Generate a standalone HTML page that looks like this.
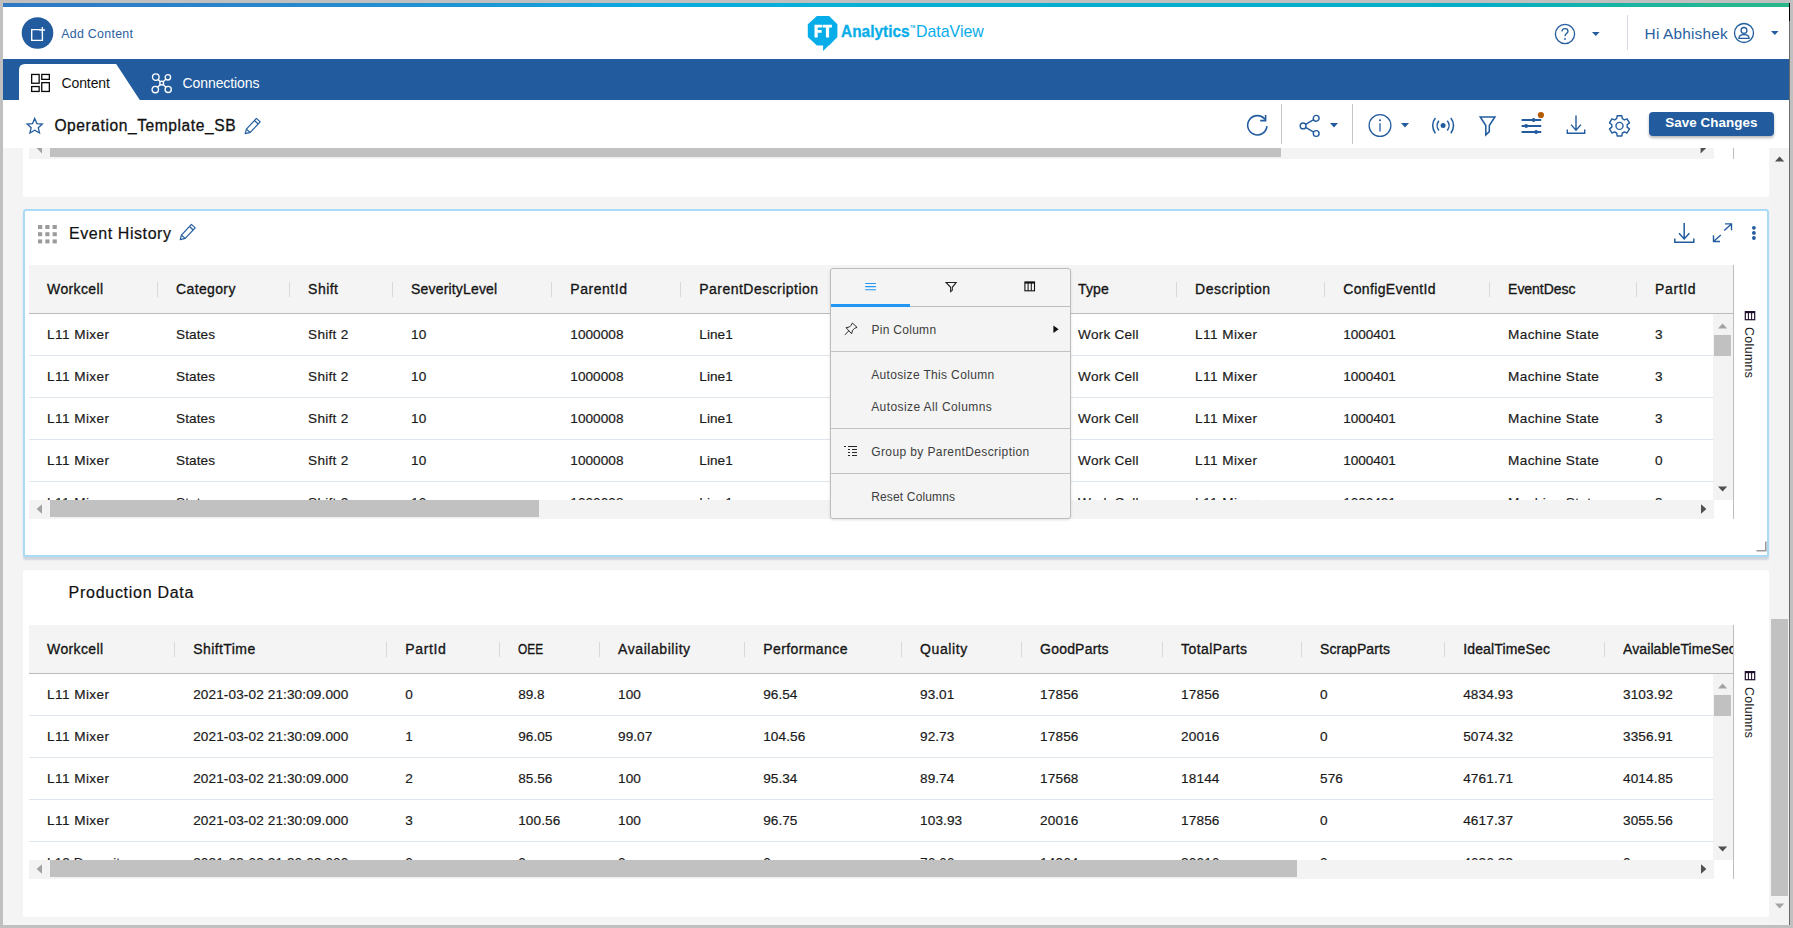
<!DOCTYPE html>
<html>
<head>
<meta charset="utf-8">
<title>FT Analytics DataView</title>
<style>
*{box-sizing:border-box;margin:0;padding:0}
html,body{width:1793px;height:928px;overflow:hidden;background:#c0c0c0;font-family:"Liberation Sans",sans-serif}
.t{position:absolute;white-space:nowrap;font-family:"Liberation Sans",sans-serif}
svg{overflow:visible}
</style>
</head>
<body>
<div style="position:absolute;left:3px;top:3px;width:1786px;height:922px;background:#f4f4f4;"></div>
<div style="position:absolute;left:1788.8px;top:3px;width:1.2px;height:922px;background:#6c6c6c;"></div>
<div style="position:absolute;left:1789px;top:3px;width:1px;height:18px;background:#000;"></div>
<div style="position:absolute;left:3px;top:3px;width:1786px;height:4px;background:linear-gradient(90deg,#2e78c2 0%,#2986ca 14%,#1b98d6 28%,#0aa9e0 36%,#06b0d6 46%,#05aed0 60%,#04adc6 83%,#16b3a6 90%,#24b690 96%,#28b78a 100%);"></div>
<div style="position:absolute;left:3px;top:7px;width:1786px;height:52px;background:#fff;"></div>
<div style="position:absolute;left:3px;top:59px;width:1786px;height:41px;background:#235c9e;"></div>
<div style="position:absolute;left:3px;top:100px;width:1786px;height:48px;background:#fff;"></div>
<svg style="position:absolute;left:21px;top:17px;" width="33" height="33" viewBox="0 0 33 33"><circle cx="16.5" cy="16" r="15.8" fill="#235c9e"/><path d="M19.3 12.6H10.7V23.4H21.4V15" fill="none" stroke="#fff" stroke-width="1.4"/><path d="M21.3 10.1V16.2M18.3 13H24" fill="none" stroke="#fff" stroke-width="1.3"/></svg>
<div class="t" style="left:61.2px;top:23.72px;line-height:20px;height:20px;color:#2b5f9f;font-size:12.4px;font-weight:400;letter-spacing:0.291px;">Add Content</div>
<svg style="position:absolute;left:806px;top:14px;" width="34" height="40" viewBox="0 0 34 40"><path d="M10.9 2H23.1L31.4 10.3V23.1L23.1 31.4H22.6L17.1 37V31.4H10.9L1.8 23.1V10.3Z" fill="#07ade8"/><path d="M8.5 10.7H16.4V13.6H11.7V15.9H15.6V18.7H11.7V23.6H8.5Z M17 10.7H25.9V13.6H23.1V23.6H19.9V13.6H17Z" fill="#fff"/></svg>
<div class="t" style="left:841.0px;top:22.15px;line-height:20px;height:20px;color:#07ade8;font-size:17px;font-weight:700;transform:scaleX(0.9075);transform-origin:0 0;-webkit-text-stroke:0.3px #07ade8;">Analytics</div>
<div class="t" style="left:909.7px;top:16.56px;line-height:20px;height:20px;color:#07ade8;font-size:4px;font-weight:700;transform:scaleX(0.8995);transform-origin:0 0;">TM</div>
<div class="t" style="left:915.9px;top:22.15px;line-height:20px;height:20px;color:#07ade8;font-size:17px;font-weight:400;transform:scaleX(0.9358);transform-origin:0 0;">DataView</div>
<svg style="position:absolute;left:1554px;top:23px;" width="22" height="22" viewBox="0 0 22 22"><circle cx="11" cy="11" r="9.6" fill="none" stroke="#235c9e" stroke-width="1.3"/><path d="M8 8.6C8 6.6 9.4 5.6 11 5.6C12.7 5.6 14 6.7 14 8.3C14 10.6 11 10.6 11 13.2" fill="none" stroke="#235c9e" stroke-width="1.3"/><circle cx="11" cy="16" r="0.9" fill="#235c9e"/></svg>
<svg style="position:absolute;left:1591.8px;top:32px;" width="8" height="4" viewBox="0 0 8 4"><path d="M0 0H7.6L3.8 4Z" fill="#235c9e"/></svg>
<div style="position:absolute;left:1627px;top:15px;width:1px;height:35px;background:#d3d8e2;"></div>
<div class="t" style="left:1644.6px;top:23.61px;line-height:20px;height:20px;color:#2a5f9f;font-size:15.4px;font-weight:400;letter-spacing:0.172px;">Hi Abhishek</div>
<svg style="position:absolute;left:1733px;top:22px;" width="22" height="22" viewBox="0 0 22 22"><circle cx="11" cy="11" r="9.5" fill="none" stroke="#235c9e" stroke-width="1.3"/><circle cx="11" cy="8.4" r="2.9" fill="none" stroke="#235c9e" stroke-width="1.3"/><path d="M5.9 16.4C5.9 13.6 8 12.6 11 12.6C14 12.6 16.1 13.6 16.1 16.4Z" fill="none" stroke="#235c9e" stroke-width="1.3" stroke-linejoin="round"/></svg>
<svg style="position:absolute;left:1770.7px;top:31px;" width="8" height="4" viewBox="0 0 8 4"><path d="M0 0H7.6L3.8 4Z" fill="#235c9e"/></svg>
<svg style="position:absolute;left:19px;top:64px;" width="122" height="36" viewBox="0 0 122 36"><path d="M0 36V6Q0 0 6 0H97.2L120.8 36Z" fill="#fff"/></svg>
<svg style="position:absolute;left:30px;top:73px;" width="21" height="20" viewBox="0 0 21 20"><g fill="none" stroke="#0a0a0a" stroke-width="1.3"><rect x="1.65" y="1.45" width="7.5" height="8.8"/><rect x="11.75" y="1.45" width="7.6" height="4.9"/><rect x="1.65" y="13.55" width="7.5" height="4.9"/><rect x="11.75" y="9.65" width="7.6" height="8.8"/></g></svg>
<div class="t" style="left:61.5px;top:73.10px;line-height:20px;height:20px;color:#111;font-size:14px;font-weight:400;letter-spacing:-0.108px;">Content</div>
<svg style="position:absolute;left:150px;top:72px;" width="24" height="24" viewBox="0 0 24 24"><g fill="none" stroke="#fff" stroke-width="1.35"><circle cx="5.8" cy="5.1" r="3.3"/><circle cx="17.9" cy="5.3" r="2.7"/><circle cx="5.3" cy="17.5" r="3.2"/><circle cx="18.2" cy="17.4" r="3.1"/><circle cx="11.7" cy="11.1" r="1.9"/><path d="M8.2 7.5L10.3 9.7M15.9 7.3L13.1 9.7M7.6 15.2L10.3 12.5M16 15.2L13.1 12.5"/></g></svg>
<div class="t" style="left:182.6px;top:73.10px;line-height:20px;height:20px;color:#fff;font-size:14px;font-weight:400;letter-spacing:-0.103px;">Connections</div>
<svg style="position:absolute;left:26px;top:116.9px;" width="17.8" height="17.8" viewBox="0 0 19.6 19.6"><path d="M9.6 1.6L12 7.2L18 7.8L13.5 11.8L14.9 17.7L9.6 14.6L4.3 17.7L5.7 11.8L1.2 7.8L7.2 7.2Z" fill="none" stroke="#235c9e" stroke-width="1.4" stroke-linejoin="miter"/></svg>
<div class="t" style="left:54.4px;top:116.09px;line-height:20px;height:20px;color:#111;font-size:15.6px;font-weight:400;letter-spacing:0.565px;-webkit-text-stroke:0.3px #111;">Operation_Template_SB</div>
<svg style="position:absolute;left:244px;top:117px;" width="18" height="18" viewBox="0 0 18 18"><g fill="none" stroke="#235c9e" stroke-width="1.2" stroke-linejoin="round"><path d="M1.2 16.6L2.4 12.2L12.4 1.4L16.2 4.9L6.2 15.4Z"/><path d="M10.4 3.5L14.2 7"/><path d="M2.4 12.2L6.2 15.4"/></g></svg>
<svg style="position:absolute;left:1245px;top:113px;" width="24" height="24" viewBox="0 0 24 24"><path d="M20.04 6.42A9.65 9.65 0 1 0 21.95 13.17" fill="none" stroke="#235c9e" stroke-width="1.6"/><path d="M20.6 1.9V7.6H15.2" fill="none" stroke="#235c9e" stroke-width="1.6"/></svg>
<div style="position:absolute;left:1281px;top:104px;width:1px;height:40px;background:#c4c4c4;"></div>
<svg style="position:absolute;left:1298px;top:114px;" width="24" height="24" viewBox="0 0 24 24"><g fill="none" stroke="#235c9e" stroke-width="1.4"><circle cx="5.1" cy="11.9" r="2.9"/><circle cx="18.2" cy="4.3" r="2.9"/><circle cx="18.2" cy="19.5" r="2.9"/><path d="M7.6 10.4L15.7 5.7M7.6 13.4L15.7 18.1"/></g></svg>
<svg style="position:absolute;left:1330.2px;top:123.1px;" width="8.2" height="4.6" viewBox="0 0 8.2 4.6"><path d="M0 0H8L4 4.6Z" fill="#235c9e"/></svg>
<div style="position:absolute;left:1352px;top:104px;width:1px;height:40px;background:#c4c4c4;"></div>
<svg style="position:absolute;left:1367px;top:113px;" width="26" height="26" viewBox="0 0 26 26"><circle cx="13" cy="12.5" r="10.9" fill="none" stroke="#235c9e" stroke-width="1.25"/><path d="M13 10.2V18.6" stroke="#235c9e" stroke-width="1.3"/><circle cx="13" cy="7.2" r="1.05" fill="#235c9e"/></svg>
<svg style="position:absolute;left:1401px;top:123.1px;" width="8.2" height="4.6" viewBox="0 0 8.2 4.6"><path d="M0 0H8L4 4.6Z" fill="#235c9e"/></svg>
<svg style="position:absolute;left:1431px;top:116px;" width="24" height="20" viewBox="0 0 24 20"><g fill="none" stroke="#235c9e" stroke-width="1.55" stroke-linecap="butt"><path d="M4.4 2C0.8 6.2 0.8 13 4.4 17.2"/><path d="M7.9 4.8C5.6 7.6 5.6 11.6 7.9 14.4"/><path d="M19.8 2C23.4 6.2 23.4 13 19.8 17.2"/><path d="M16.3 4.8C18.6 7.6 18.6 11.6 16.3 14.4"/></g><circle cx="12.1" cy="9.6" r="2.5" fill="#235c9e"/></svg>
<svg style="position:absolute;left:1478px;top:115px;" width="20" height="22" viewBox="0 0 20 22"><path d="M2.3 2H16.9L11.3 10.5V16.6L7.8 19.9V10.5Z" fill="none" stroke="#235c9e" stroke-width="1.55" stroke-linejoin="miter"/></svg>
<svg style="position:absolute;left:1520px;top:111px;" width="24" height="24" viewBox="0 0 24 24"><g stroke="#235c9e" stroke-width="1.8"><path d="M1.6 9H21.2M1.6 15H21.2M1.6 21H21.2"/></g><g fill="#235c9e"><circle cx="13.6" cy="9" r="1.9"/><circle cx="6.2" cy="15" r="1.9"/><circle cx="16.1" cy="21" r="1.9"/></g><circle cx="20.9" cy="4" r="3.1" fill="#b35a06"/></svg>
<svg style="position:absolute;left:1565.7px;top:115.4px;" width="20" height="20" viewBox="0 0 20 20"><g fill="none" stroke="#235c9e" stroke-width="1.4"><path d="M10 0.6V14.4M5 9.6L10 15.2L15 9.6"/><path d="M1.3 14.6V18.2H18.7V14.6"/></g></svg>
<svg style="position:absolute;left:1607px;top:113px;" width="26" height="26" viewBox="0 0 26 26"><path d="M9.74 5.71L10.13 2.77L14.87 2.77L15.26 5.71A7.70 7.70 0 0 1 17.35 6.92L20.08 5.78L22.46 9.89L20.11 11.70A7.70 7.70 0 0 1 20.11 14.10L22.46 15.91L20.08 20.02L17.35 18.88A7.70 7.70 0 0 1 15.26 20.09L14.87 23.03L10.13 23.03L9.74 20.09A7.70 7.70 0 0 1 7.65 18.88L4.92 20.02L2.54 15.91L4.89 14.10A7.70 7.70 0 0 1 4.89 11.70L2.54 9.89L4.92 5.78L7.65 6.92A7.70 7.70 0 0 1 9.74 5.71 Z" fill="none" stroke="#235c9e" stroke-width="1.4" stroke-linejoin="round"/><circle cx="12.5" cy="12.9" r="3.5" fill="none" stroke="#235c9e" stroke-width="1.4"/></svg>
<div style="position:absolute;left:1649px;top:112px;width:125px;height:24px;background:#235c9e;border-radius:4px;box-shadow:0 2px 3px rgba(0,0,0,0.28);"></div>
<div class="t" style="left:1665.2px;top:113.18px;line-height:20px;height:20px;color:#fff;font-size:13.4px;font-weight:700;letter-spacing:0.059px;">Save Changes</div>
<div style="position:absolute;left:1771px;top:148px;width:18px;height:777px;background:#f3f3f3;"></div>
<div style="position:absolute;left:1770.7px;top:618.8px;width:17px;height:277px;background:#c1c1c1;"></div>
<svg style="position:absolute;left:1774.8px;top:156.3px;" width="10" height="6" viewBox="0 0 10 6"><path d="M0 5.5L4.6 0.5L9.2 5.5Z" fill="#505050"/></svg>
<svg style="position:absolute;left:1774.8px;top:902.6px;" width="10" height="6" viewBox="0 0 10 6"><path d="M0 0.5L4.6 5.5L9.2 0.5Z" fill="#a3a3a3"/></svg>
<div style="position:absolute;left:23px;top:148px;width:1746px;height:48.5px;background:#fff;border-radius:0 0 2px 2px;"></div>
<div style="position:absolute;left:29px;top:148px;width:1685px;height:10.6px;background:#f3f3f3;"></div>
<div style="position:absolute;left:50px;top:148px;width:1231px;height:8.5px;background:#c1c1c1;"></div>
<svg style="position:absolute;left:36px;top:148px;" width="7" height="6" viewBox="0 0 7 6"><path d="M6 0V5.4L0.6 0Z" fill="#a3a3a3"/></svg>
<svg style="position:absolute;left:1700.4px;top:148px;" width="8" height="6" viewBox="0 0 8 6"><path d="M0.6 0H6.2L0.6 5.4Z" fill="#505050"/></svg>
<div style="position:absolute;left:1733px;top:148px;width:1px;height:10.6px;background:#bdbdbd;"></div>
<div style="position:absolute;left:23px;top:209px;width:1746px;height:348px;background:#fff;border:2px solid #a9dbf6;border-radius:3px;box-shadow:0 3px 1.5px -0.5px rgba(140,155,180,0.33);"></div>
<svg style="position:absolute;left:38.2px;top:225.2px;" width="20" height="20" viewBox="0 0 20 20"><rect x="0.0" y="0.0" width="4.2" height="4" fill="#9b9b9b"/><rect x="0.0" y="7.2" width="4.2" height="4" fill="#9b9b9b"/><rect x="0.0" y="14.4" width="4.2" height="4" fill="#9b9b9b"/><rect x="7.3" y="0.0" width="4.2" height="4" fill="#9b9b9b"/><rect x="7.3" y="7.2" width="4.2" height="4" fill="#9b9b9b"/><rect x="7.3" y="14.4" width="4.2" height="4" fill="#9b9b9b"/><rect x="14.6" y="0.0" width="4.2" height="4" fill="#9b9b9b"/><rect x="14.6" y="7.2" width="4.2" height="4" fill="#9b9b9b"/><rect x="14.6" y="14.4" width="4.2" height="4" fill="#9b9b9b"/></svg>
<div class="t" style="left:69px;top:223.78px;line-height:20px;height:20px;color:#111;font-size:16px;font-weight:400;letter-spacing:0.572px;-webkit-text-stroke:0.2px #111;">Event History</div>
<svg style="position:absolute;left:178.6px;top:223.4px;" width="18" height="18" viewBox="0 0 18 18"><g fill="none" stroke="#235c9e" stroke-width="1.2" stroke-linejoin="round"><path d="M1.2 16.6L2.4 12.2L12.4 1.4L16.2 4.9L6.2 15.4Z"/><path d="M10.4 3.5L14.2 7"/><path d="M2.4 12.2L6.2 15.4"/></g></svg>
<svg style="position:absolute;left:1674.2px;top:222.9px;" width="21" height="20" viewBox="0 0 21 20"><g fill="none" stroke="#235c9e" stroke-width="1.5"><path d="M10.2 0V15.2M5 10.2L10.2 16L15.4 10.2"/><path d="M0.8 15.6V19.2H19.8V15.6"/></g></svg>
<svg style="position:absolute;left:1713px;top:222.6px;" width="20" height="20" viewBox="0 0 20 20"><g fill="none" stroke="#235c9e" stroke-width="1.4"><path d="M11.2 7.4L18.2 1.2M12 0.9H18.5V7.2"/><path d="M7.8 12L0.8 18.2M7 18.5H0.5V12.2"/></g></svg>
<svg style="position:absolute;left:1751px;top:225px;" width="6" height="16" viewBox="0 0 6 16"><g fill="#235c9e"><circle cx="2.9" cy="2.8" r="1.9"/><circle cx="2.9" cy="7.9" r="1.9"/><circle cx="2.9" cy="13" r="1.9"/></g></svg>
<svg style="position:absolute;left:1756px;top:541px;" width="11" height="11" viewBox="0 0 11 11"><path d="M9.8 0.5V9.8H0.5" fill="none" stroke="#9a9a9a" stroke-width="1.6"/></svg>
<div style="position:absolute;left:23px;top:569.5px;width:1746px;height:347px;background:#fff;border-radius:2px;"></div>
<div class="t" style="left:68.6px;top:582.53px;line-height:20px;height:20px;color:#111;font-size:16px;font-weight:400;letter-spacing:0.719px;-webkit-text-stroke:0.2px #111;">Production Data</div>
<div style="position:absolute;left:29px;top:265px;width:1704.5px;height:48px;background:#f4f4f4;"></div>
<div style="position:absolute;left:29px;top:313px;width:1704.5px;height:1px;background:#bcbcbc;"></div>
<div style="position:absolute;left:29px;top:314px;width:1685px;height:186px;background:#fff;"></div>
<div style="position:absolute;left:29px;top:355px;width:1685px;height:1px;background:#dfe5ec;"></div>
<div style="position:absolute;left:29px;top:397px;width:1685px;height:1px;background:#dfe5ec;"></div>
<div style="position:absolute;left:29px;top:439px;width:1685px;height:1px;background:#dfe5ec;"></div>
<div style="position:absolute;left:29px;top:481px;width:1685px;height:1px;background:#dfe5ec;"></div>
<div class="t" style="left:47.1px;top:278.95px;line-height:20px;height:20px;color:#151515;font-size:14px;font-weight:400;letter-spacing:0.368px;-webkit-text-stroke:0.32px #151515;">Workcell</div>
<div style="position:absolute;left:157px;top:281.5px;width:1px;height:15px;background:#d9d9d9;"></div>
<div class="t" style="left:176.1px;top:278.95px;line-height:20px;height:20px;color:#151515;font-size:14px;font-weight:400;letter-spacing:0.355px;-webkit-text-stroke:0.32px #151515;">Category</div>
<div style="position:absolute;left:289px;top:281.5px;width:1px;height:15px;background:#d9d9d9;"></div>
<div class="t" style="left:308.1px;top:278.95px;line-height:20px;height:20px;color:#151515;font-size:14px;font-weight:400;letter-spacing:0.471px;-webkit-text-stroke:0.32px #151515;">Shift</div>
<div style="position:absolute;left:392px;top:281.5px;width:1px;height:15px;background:#d9d9d9;"></div>
<div class="t" style="left:411.1px;top:278.95px;line-height:20px;height:20px;color:#151515;font-size:14px;font-weight:400;letter-spacing:0.171px;-webkit-text-stroke:0.32px #151515;">SeverityLevel</div>
<div style="position:absolute;left:551px;top:281.5px;width:1px;height:15px;background:#d9d9d9;"></div>
<div class="t" style="left:570.3px;top:278.95px;line-height:20px;height:20px;color:#151515;font-size:14px;font-weight:400;letter-spacing:0.538px;-webkit-text-stroke:0.32px #151515;">ParentId</div>
<div style="position:absolute;left:680px;top:281.5px;width:1px;height:15px;background:#d9d9d9;"></div>
<div class="t" style="left:699.3px;top:278.95px;line-height:20px;height:20px;color:#151515;font-size:14px;font-weight:400;letter-spacing:0.464px;-webkit-text-stroke:0.32px #151515;">ParentDescription</div>
<div class="t" style="left:1078.1px;top:278.95px;line-height:20px;height:20px;color:#151515;font-size:14px;font-weight:400;letter-spacing:0.080px;-webkit-text-stroke:0.32px #151515;">Type</div>
<div style="position:absolute;left:1176px;top:281.5px;width:1px;height:15px;background:#d9d9d9;"></div>
<div class="t" style="left:1195.1px;top:278.95px;line-height:20px;height:20px;color:#151515;font-size:14px;font-weight:400;letter-spacing:0.497px;-webkit-text-stroke:0.32px #151515;">Description</div>
<div style="position:absolute;left:1324px;top:281.5px;width:1px;height:15px;background:#d9d9d9;"></div>
<div class="t" style="left:1343.2px;top:278.95px;line-height:20px;height:20px;color:#151515;font-size:14px;font-weight:400;letter-spacing:0.362px;-webkit-text-stroke:0.32px #151515;">ConfigEventId</div>
<div style="position:absolute;left:1489px;top:281.5px;width:1px;height:15px;background:#d9d9d9;"></div>
<div class="t" style="left:1508.1px;top:278.95px;line-height:20px;height:20px;color:#151515;font-size:14px;font-weight:400;letter-spacing:-0.038px;-webkit-text-stroke:0.32px #151515;">EventDesc</div>
<div style="position:absolute;left:1636px;top:281.5px;width:1px;height:15px;background:#d9d9d9;"></div>
<div class="t" style="left:1655.1px;top:278.95px;line-height:20px;height:20px;color:#151515;font-size:14px;font-weight:400;letter-spacing:0.608px;-webkit-text-stroke:0.32px #151515;">PartId</div>
<div class="t" style="left:47.1px;top:325.36px;line-height:20px;height:20px;color:#1a1a1a;font-size:13.6px;font-weight:400;letter-spacing:0.414px;-webkit-text-stroke:0.18px #1a1a1a;">L11 Mixer</div>
<div class="t" style="left:176.1px;top:325.36px;line-height:20px;height:20px;color:#1a1a1a;font-size:13.6px;font-weight:400;letter-spacing:0.071px;-webkit-text-stroke:0.18px #1a1a1a;">States</div>
<div class="t" style="left:308.1px;top:325.36px;line-height:20px;height:20px;color:#1a1a1a;font-size:13.6px;font-weight:400;letter-spacing:0.276px;-webkit-text-stroke:0.18px #1a1a1a;">Shift 2</div>
<div class="t" style="left:411.1px;top:325.36px;line-height:20px;height:20px;color:#1a1a1a;font-size:13.6px;font-weight:400;letter-spacing:-0.025px;-webkit-text-stroke:0.18px #1a1a1a;">10</div>
<div class="t" style="left:570.3px;top:325.36px;line-height:20px;height:20px;color:#1a1a1a;font-size:13.6px;font-weight:400;letter-spacing:0.046px;-webkit-text-stroke:0.18px #1a1a1a;">1000008</div>
<div class="t" style="left:699.3px;top:325.36px;line-height:20px;height:20px;color:#1a1a1a;font-size:13.6px;font-weight:400;letter-spacing:0.034px;-webkit-text-stroke:0.18px #1a1a1a;">Line1</div>
<div class="t" style="left:1078.1px;top:325.36px;line-height:20px;height:20px;color:#1a1a1a;font-size:13.6px;font-weight:400;letter-spacing:0.229px;-webkit-text-stroke:0.18px #1a1a1a;">Work Cell</div>
<div class="t" style="left:1195.1px;top:325.36px;line-height:20px;height:20px;color:#1a1a1a;font-size:13.6px;font-weight:400;letter-spacing:0.414px;-webkit-text-stroke:0.18px #1a1a1a;">L11 Mixer</div>
<div class="t" style="left:1343.2px;top:325.36px;line-height:20px;height:20px;color:#1a1a1a;font-size:13.6px;font-weight:400;letter-spacing:-0.037px;-webkit-text-stroke:0.18px #1a1a1a;">1000401</div>
<div class="t" style="left:1508.1px;top:325.36px;line-height:20px;height:20px;color:#1a1a1a;font-size:13.6px;font-weight:400;letter-spacing:0.324px;-webkit-text-stroke:0.18px #1a1a1a;">Machine State</div>
<div class="t" style="left:1655.1px;top:325.36px;line-height:20px;height:20px;color:#1a1a1a;font-size:13.6px;font-weight:400;-webkit-text-stroke:0.18px #1a1a1a;">3</div>
<div class="t" style="left:47.1px;top:367.36px;line-height:20px;height:20px;color:#1a1a1a;font-size:13.6px;font-weight:400;letter-spacing:0.414px;-webkit-text-stroke:0.18px #1a1a1a;">L11 Mixer</div>
<div class="t" style="left:176.1px;top:367.36px;line-height:20px;height:20px;color:#1a1a1a;font-size:13.6px;font-weight:400;letter-spacing:0.071px;-webkit-text-stroke:0.18px #1a1a1a;">States</div>
<div class="t" style="left:308.1px;top:367.36px;line-height:20px;height:20px;color:#1a1a1a;font-size:13.6px;font-weight:400;letter-spacing:0.276px;-webkit-text-stroke:0.18px #1a1a1a;">Shift 2</div>
<div class="t" style="left:411.1px;top:367.36px;line-height:20px;height:20px;color:#1a1a1a;font-size:13.6px;font-weight:400;letter-spacing:-0.025px;-webkit-text-stroke:0.18px #1a1a1a;">10</div>
<div class="t" style="left:570.3px;top:367.36px;line-height:20px;height:20px;color:#1a1a1a;font-size:13.6px;font-weight:400;letter-spacing:0.046px;-webkit-text-stroke:0.18px #1a1a1a;">1000008</div>
<div class="t" style="left:699.3px;top:367.36px;line-height:20px;height:20px;color:#1a1a1a;font-size:13.6px;font-weight:400;letter-spacing:0.034px;-webkit-text-stroke:0.18px #1a1a1a;">Line1</div>
<div class="t" style="left:1078.1px;top:367.36px;line-height:20px;height:20px;color:#1a1a1a;font-size:13.6px;font-weight:400;letter-spacing:0.229px;-webkit-text-stroke:0.18px #1a1a1a;">Work Cell</div>
<div class="t" style="left:1195.1px;top:367.36px;line-height:20px;height:20px;color:#1a1a1a;font-size:13.6px;font-weight:400;letter-spacing:0.414px;-webkit-text-stroke:0.18px #1a1a1a;">L11 Mixer</div>
<div class="t" style="left:1343.2px;top:367.36px;line-height:20px;height:20px;color:#1a1a1a;font-size:13.6px;font-weight:400;letter-spacing:-0.037px;-webkit-text-stroke:0.18px #1a1a1a;">1000401</div>
<div class="t" style="left:1508.1px;top:367.36px;line-height:20px;height:20px;color:#1a1a1a;font-size:13.6px;font-weight:400;letter-spacing:0.324px;-webkit-text-stroke:0.18px #1a1a1a;">Machine State</div>
<div class="t" style="left:1655.1px;top:367.36px;line-height:20px;height:20px;color:#1a1a1a;font-size:13.6px;font-weight:400;-webkit-text-stroke:0.18px #1a1a1a;">3</div>
<div class="t" style="left:47.1px;top:409.36px;line-height:20px;height:20px;color:#1a1a1a;font-size:13.6px;font-weight:400;letter-spacing:0.414px;-webkit-text-stroke:0.18px #1a1a1a;">L11 Mixer</div>
<div class="t" style="left:176.1px;top:409.36px;line-height:20px;height:20px;color:#1a1a1a;font-size:13.6px;font-weight:400;letter-spacing:0.071px;-webkit-text-stroke:0.18px #1a1a1a;">States</div>
<div class="t" style="left:308.1px;top:409.36px;line-height:20px;height:20px;color:#1a1a1a;font-size:13.6px;font-weight:400;letter-spacing:0.276px;-webkit-text-stroke:0.18px #1a1a1a;">Shift 2</div>
<div class="t" style="left:411.1px;top:409.36px;line-height:20px;height:20px;color:#1a1a1a;font-size:13.6px;font-weight:400;letter-spacing:-0.025px;-webkit-text-stroke:0.18px #1a1a1a;">10</div>
<div class="t" style="left:570.3px;top:409.36px;line-height:20px;height:20px;color:#1a1a1a;font-size:13.6px;font-weight:400;letter-spacing:0.046px;-webkit-text-stroke:0.18px #1a1a1a;">1000008</div>
<div class="t" style="left:699.3px;top:409.36px;line-height:20px;height:20px;color:#1a1a1a;font-size:13.6px;font-weight:400;letter-spacing:0.034px;-webkit-text-stroke:0.18px #1a1a1a;">Line1</div>
<div class="t" style="left:1078.1px;top:409.36px;line-height:20px;height:20px;color:#1a1a1a;font-size:13.6px;font-weight:400;letter-spacing:0.229px;-webkit-text-stroke:0.18px #1a1a1a;">Work Cell</div>
<div class="t" style="left:1195.1px;top:409.36px;line-height:20px;height:20px;color:#1a1a1a;font-size:13.6px;font-weight:400;letter-spacing:0.414px;-webkit-text-stroke:0.18px #1a1a1a;">L11 Mixer</div>
<div class="t" style="left:1343.2px;top:409.36px;line-height:20px;height:20px;color:#1a1a1a;font-size:13.6px;font-weight:400;letter-spacing:-0.037px;-webkit-text-stroke:0.18px #1a1a1a;">1000401</div>
<div class="t" style="left:1508.1px;top:409.36px;line-height:20px;height:20px;color:#1a1a1a;font-size:13.6px;font-weight:400;letter-spacing:0.324px;-webkit-text-stroke:0.18px #1a1a1a;">Machine State</div>
<div class="t" style="left:1655.1px;top:409.36px;line-height:20px;height:20px;color:#1a1a1a;font-size:13.6px;font-weight:400;-webkit-text-stroke:0.18px #1a1a1a;">3</div>
<div class="t" style="left:47.1px;top:451.36px;line-height:20px;height:20px;color:#1a1a1a;font-size:13.6px;font-weight:400;letter-spacing:0.414px;-webkit-text-stroke:0.18px #1a1a1a;">L11 Mixer</div>
<div class="t" style="left:176.1px;top:451.36px;line-height:20px;height:20px;color:#1a1a1a;font-size:13.6px;font-weight:400;letter-spacing:0.071px;-webkit-text-stroke:0.18px #1a1a1a;">States</div>
<div class="t" style="left:308.1px;top:451.36px;line-height:20px;height:20px;color:#1a1a1a;font-size:13.6px;font-weight:400;letter-spacing:0.276px;-webkit-text-stroke:0.18px #1a1a1a;">Shift 2</div>
<div class="t" style="left:411.1px;top:451.36px;line-height:20px;height:20px;color:#1a1a1a;font-size:13.6px;font-weight:400;letter-spacing:-0.025px;-webkit-text-stroke:0.18px #1a1a1a;">10</div>
<div class="t" style="left:570.3px;top:451.36px;line-height:20px;height:20px;color:#1a1a1a;font-size:13.6px;font-weight:400;letter-spacing:0.046px;-webkit-text-stroke:0.18px #1a1a1a;">1000008</div>
<div class="t" style="left:699.3px;top:451.36px;line-height:20px;height:20px;color:#1a1a1a;font-size:13.6px;font-weight:400;letter-spacing:0.034px;-webkit-text-stroke:0.18px #1a1a1a;">Line1</div>
<div class="t" style="left:1078.1px;top:451.36px;line-height:20px;height:20px;color:#1a1a1a;font-size:13.6px;font-weight:400;letter-spacing:0.229px;-webkit-text-stroke:0.18px #1a1a1a;">Work Cell</div>
<div class="t" style="left:1195.1px;top:451.36px;line-height:20px;height:20px;color:#1a1a1a;font-size:13.6px;font-weight:400;letter-spacing:0.414px;-webkit-text-stroke:0.18px #1a1a1a;">L11 Mixer</div>
<div class="t" style="left:1343.2px;top:451.36px;line-height:20px;height:20px;color:#1a1a1a;font-size:13.6px;font-weight:400;letter-spacing:-0.037px;-webkit-text-stroke:0.18px #1a1a1a;">1000401</div>
<div class="t" style="left:1508.1px;top:451.36px;line-height:20px;height:20px;color:#1a1a1a;font-size:13.6px;font-weight:400;letter-spacing:0.324px;-webkit-text-stroke:0.18px #1a1a1a;">Machine State</div>
<div class="t" style="left:1655.1px;top:451.36px;line-height:20px;height:20px;color:#1a1a1a;font-size:13.6px;font-weight:400;-webkit-text-stroke:0.18px #1a1a1a;">0</div>
<div class="t" style="left:47.1px;top:493.36px;line-height:20px;height:20px;color:#1a1a1a;font-size:13.6px;font-weight:400;letter-spacing:0.414px;-webkit-text-stroke:0.18px #1a1a1a;">L11 Mixer</div>
<div class="t" style="left:176.1px;top:493.36px;line-height:20px;height:20px;color:#1a1a1a;font-size:13.6px;font-weight:400;letter-spacing:0.071px;-webkit-text-stroke:0.18px #1a1a1a;">States</div>
<div class="t" style="left:308.1px;top:493.36px;line-height:20px;height:20px;color:#1a1a1a;font-size:13.6px;font-weight:400;letter-spacing:0.276px;-webkit-text-stroke:0.18px #1a1a1a;">Shift 2</div>
<div class="t" style="left:411.1px;top:493.36px;line-height:20px;height:20px;color:#1a1a1a;font-size:13.6px;font-weight:400;letter-spacing:-0.025px;-webkit-text-stroke:0.18px #1a1a1a;">10</div>
<div class="t" style="left:570.3px;top:493.36px;line-height:20px;height:20px;color:#1a1a1a;font-size:13.6px;font-weight:400;letter-spacing:0.046px;-webkit-text-stroke:0.18px #1a1a1a;">1000008</div>
<div class="t" style="left:699.3px;top:493.36px;line-height:20px;height:20px;color:#1a1a1a;font-size:13.6px;font-weight:400;letter-spacing:0.034px;-webkit-text-stroke:0.18px #1a1a1a;">Line1</div>
<div class="t" style="left:1078.1px;top:493.36px;line-height:20px;height:20px;color:#1a1a1a;font-size:13.6px;font-weight:400;letter-spacing:0.229px;-webkit-text-stroke:0.18px #1a1a1a;">Work Cell</div>
<div class="t" style="left:1195.1px;top:493.36px;line-height:20px;height:20px;color:#1a1a1a;font-size:13.6px;font-weight:400;letter-spacing:0.414px;-webkit-text-stroke:0.18px #1a1a1a;">L11 Mixer</div>
<div class="t" style="left:1343.2px;top:493.36px;line-height:20px;height:20px;color:#1a1a1a;font-size:13.6px;font-weight:400;letter-spacing:-0.037px;-webkit-text-stroke:0.18px #1a1a1a;">1000401</div>
<div class="t" style="left:1508.1px;top:493.36px;line-height:20px;height:20px;color:#1a1a1a;font-size:13.6px;font-weight:400;letter-spacing:0.324px;-webkit-text-stroke:0.18px #1a1a1a;">Machine State</div>
<div class="t" style="left:1655.1px;top:493.36px;line-height:20px;height:20px;color:#1a1a1a;font-size:13.6px;font-weight:400;-webkit-text-stroke:0.18px #1a1a1a;">3</div>
<div style="position:absolute;left:29px;top:500px;width:1685px;height:19px;background:#f3f3f3;"></div>
<div style="position:absolute;left:50px;top:500px;width:489px;height:17px;background:#c1c1c1;"></div>
<svg style="position:absolute;left:36px;top:503.5px;" width="7" height="10" viewBox="0 0 7 10"><path d="M6 0.3V9.7L0.6 5Z" fill="#a3a3a3"/></svg>
<svg style="position:absolute;left:1699.8px;top:503.8px;" width="7" height="10" viewBox="0 0 7 10"><path d="M1 0.3V9.7L6.4 5Z" fill="#505050"/></svg>
<div style="position:absolute;left:1714px;top:500px;width:19px;height:19px;background:#fff;"></div>
<div style="position:absolute;left:1712.5px;top:314px;width:20.5px;height:186px;background:#f3f3f3;"></div>
<div style="position:absolute;left:1713.8px;top:335px;width:17px;height:21px;background:#c1c1c1;"></div>
<svg style="position:absolute;left:1717.5px;top:323px;" width="10" height="6" viewBox="0 0 10 6"><path d="M0 5.5L4.6 0.6L9.2 5.5Z" fill="#a3a3a3"/></svg>
<svg style="position:absolute;left:1717.5px;top:486px;" width="10" height="6" viewBox="0 0 10 6"><path d="M0 0.5L4.6 5.4L9.2 0.5Z" fill="#505050"/></svg>
<div style="position:absolute;left:1733px;top:265px;width:1px;height:254px;background:#bdbdbd;"></div>
<svg style="position:absolute;left:1744px;top:310px;" width="12" height="12" viewBox="0 0 12 12"><g fill="none" stroke="#1d0f2a"><rect x="1.3" y="1.7" width="9.4" height="8" stroke-width="1.2"/><path d="M1 2.2H11" stroke-width="2"/><path d="M4.4 2.5V9.7M7.6 2.5V9.7" stroke-width="1.05"/></g></svg>
<div class="t" style="left:1739px;top:327.3px;width:20px;height:56px;font-size:12.3px;letter-spacing:0.4px;color:#1a1a1a;writing-mode:vertical-rl;line-height:20px;">Columns</div>
<div style="position:absolute;left:29px;top:625px;width:1704.5px;height:48px;background:#f4f4f4;"></div>
<div style="position:absolute;left:29px;top:673px;width:1704.5px;height:1px;background:#bcbcbc;"></div>
<div style="position:absolute;left:29px;top:674px;width:1685px;height:186px;background:#fff;"></div>
<div style="position:absolute;left:29px;top:715px;width:1685px;height:1px;background:#dfe5ec;"></div>
<div style="position:absolute;left:29px;top:757px;width:1685px;height:1px;background:#dfe5ec;"></div>
<div style="position:absolute;left:29px;top:799px;width:1685px;height:1px;background:#dfe5ec;"></div>
<div style="position:absolute;left:29px;top:841px;width:1685px;height:1px;background:#dfe5ec;"></div>
<div class="t" style="left:47.1px;top:638.95px;line-height:20px;height:20px;color:#151515;font-size:14px;font-weight:400;letter-spacing:0.368px;-webkit-text-stroke:0.32px #151515;">Workcell</div>
<div style="position:absolute;left:174px;top:641.5px;width:1px;height:15px;background:#d9d9d9;"></div>
<div class="t" style="left:193.2px;top:638.95px;line-height:20px;height:20px;color:#151515;font-size:14px;font-weight:400;letter-spacing:0.424px;-webkit-text-stroke:0.32px #151515;">ShiftTime</div>
<div style="position:absolute;left:386px;top:641.5px;width:1px;height:15px;background:#d9d9d9;"></div>
<div class="t" style="left:405.3px;top:638.95px;line-height:20px;height:20px;color:#151515;font-size:14px;font-weight:400;letter-spacing:0.608px;-webkit-text-stroke:0.32px #151515;">PartId</div>
<div style="position:absolute;left:499px;top:641.5px;width:1px;height:15px;background:#d9d9d9;"></div>
<div class="t" style="left:518.2px;top:638.95px;line-height:20px;height:20px;color:#151515;font-size:14px;font-weight:400;transform:scaleX(0.8486);transform-origin:0 0;-webkit-text-stroke:0.32px #151515;">OEE</div>
<div style="position:absolute;left:599px;top:641.5px;width:1px;height:15px;background:#d9d9d9;"></div>
<div class="t" style="left:618.1px;top:638.95px;line-height:20px;height:20px;color:#151515;font-size:14px;font-weight:400;letter-spacing:0.555px;-webkit-text-stroke:0.32px #151515;">Availability</div>
<div style="position:absolute;left:744px;top:641.5px;width:1px;height:15px;background:#d9d9d9;"></div>
<div class="t" style="left:763.2px;top:638.95px;line-height:20px;height:20px;color:#151515;font-size:14px;font-weight:400;letter-spacing:0.414px;-webkit-text-stroke:0.32px #151515;">Performance</div>
<div style="position:absolute;left:901px;top:641.5px;width:1px;height:15px;background:#d9d9d9;"></div>
<div class="t" style="left:920.1px;top:638.95px;line-height:20px;height:20px;color:#151515;font-size:14px;font-weight:400;letter-spacing:0.604px;-webkit-text-stroke:0.32px #151515;">Quality</div>
<div style="position:absolute;left:1021px;top:641.5px;width:1px;height:15px;background:#d9d9d9;"></div>
<div class="t" style="left:1040.1px;top:638.95px;line-height:20px;height:20px;color:#151515;font-size:14px;font-weight:400;letter-spacing:0.195px;-webkit-text-stroke:0.32px #151515;">GoodParts</div>
<div style="position:absolute;left:1162px;top:641.5px;width:1px;height:15px;background:#d9d9d9;"></div>
<div class="t" style="left:1181.1px;top:638.95px;line-height:20px;height:20px;color:#151515;font-size:14px;font-weight:400;letter-spacing:0.417px;-webkit-text-stroke:0.32px #151515;">TotalParts</div>
<div style="position:absolute;left:1301px;top:641.5px;width:1px;height:15px;background:#d9d9d9;"></div>
<div class="t" style="left:1320.1px;top:638.95px;line-height:20px;height:20px;color:#151515;font-size:14px;font-weight:400;letter-spacing:0.061px;-webkit-text-stroke:0.32px #151515;">ScrapParts</div>
<div style="position:absolute;left:1444px;top:641.5px;width:1px;height:15px;background:#d9d9d9;"></div>
<div class="t" style="left:1463.2px;top:638.95px;line-height:20px;height:20px;color:#151515;font-size:14px;font-weight:400;letter-spacing:0.157px;-webkit-text-stroke:0.32px #151515;">IdealTimeSec</div>
<div style="position:absolute;left:1604px;top:641.5px;width:1px;height:15px;background:#d9d9d9;"></div>
<div class="t" style="left:1623px;top:638.95px;line-height:20px;height:20px;color:#151515;font-size:14px;font-weight:400;letter-spacing:0.101px;-webkit-text-stroke:0.32px #151515;width:110px;overflow:hidden;">AvailableTimeSec</div>
<div class="t" style="left:47.1px;top:685.36px;line-height:20px;height:20px;color:#1a1a1a;font-size:13.6px;font-weight:400;letter-spacing:0.414px;-webkit-text-stroke:0.18px #1a1a1a;">L11 Mixer</div>
<div class="t" style="left:193.2px;top:685.36px;line-height:20px;height:20px;color:#1a1a1a;font-size:13.6px;font-weight:400;letter-spacing:0.110px;-webkit-text-stroke:0.18px #1a1a1a;">2021-03-02 21:30:09.000</div>
<div class="t" style="left:405.3px;top:685.36px;line-height:20px;height:20px;color:#1a1a1a;font-size:13.6px;font-weight:400;-webkit-text-stroke:0.18px #1a1a1a;">0</div>
<div class="t" style="left:518.2px;top:685.36px;line-height:20px;height:20px;color:#1a1a1a;font-size:13.6px;font-weight:400;letter-spacing:-0.040px;-webkit-text-stroke:0.18px #1a1a1a;">89.8</div>
<div class="t" style="left:618.1px;top:685.36px;line-height:20px;height:20px;color:#1a1a1a;font-size:13.6px;font-weight:400;letter-spacing:-0.019px;-webkit-text-stroke:0.18px #1a1a1a;">100</div>
<div class="t" style="left:763.2px;top:685.36px;line-height:20px;height:20px;color:#1a1a1a;font-size:13.6px;font-weight:400;letter-spacing:0.042px;-webkit-text-stroke:0.18px #1a1a1a;">96.54</div>
<div class="t" style="left:920.1px;top:685.36px;line-height:20px;height:20px;color:#1a1a1a;font-size:13.6px;font-weight:400;letter-spacing:0.042px;-webkit-text-stroke:0.18px #1a1a1a;">93.01</div>
<div class="t" style="left:1040.1px;top:685.36px;line-height:20px;height:20px;color:#1a1a1a;font-size:13.6px;font-weight:400;letter-spacing:0.134px;-webkit-text-stroke:0.18px #1a1a1a;">17856</div>
<div class="t" style="left:1181.1px;top:685.36px;line-height:20px;height:20px;color:#1a1a1a;font-size:13.6px;font-weight:400;letter-spacing:0.134px;-webkit-text-stroke:0.18px #1a1a1a;">17856</div>
<div class="t" style="left:1320.1px;top:685.36px;line-height:20px;height:20px;color:#1a1a1a;font-size:13.6px;font-weight:400;-webkit-text-stroke:0.18px #1a1a1a;">0</div>
<div class="t" style="left:1463.2px;top:685.36px;line-height:20px;height:20px;color:#1a1a1a;font-size:13.6px;font-weight:400;letter-spacing:0.127px;-webkit-text-stroke:0.18px #1a1a1a;">4834.93</div>
<div class="t" style="left:1623px;top:685.36px;line-height:20px;height:20px;color:#1a1a1a;font-size:13.6px;font-weight:400;letter-spacing:0.127px;-webkit-text-stroke:0.18px #1a1a1a;">3103.92</div>
<div class="t" style="left:47.1px;top:727.36px;line-height:20px;height:20px;color:#1a1a1a;font-size:13.6px;font-weight:400;letter-spacing:0.414px;-webkit-text-stroke:0.18px #1a1a1a;">L11 Mixer</div>
<div class="t" style="left:193.2px;top:727.36px;line-height:20px;height:20px;color:#1a1a1a;font-size:13.6px;font-weight:400;letter-spacing:0.110px;-webkit-text-stroke:0.18px #1a1a1a;">2021-03-02 21:30:09.000</div>
<div class="t" style="left:405.3px;top:727.36px;line-height:20px;height:20px;color:#1a1a1a;font-size:13.6px;font-weight:400;-webkit-text-stroke:0.18px #1a1a1a;">1</div>
<div class="t" style="left:518.2px;top:727.36px;line-height:20px;height:20px;color:#1a1a1a;font-size:13.6px;font-weight:400;letter-spacing:0.042px;-webkit-text-stroke:0.18px #1a1a1a;">96.05</div>
<div class="t" style="left:618.1px;top:727.36px;line-height:20px;height:20px;color:#1a1a1a;font-size:13.6px;font-weight:400;letter-spacing:0.042px;-webkit-text-stroke:0.18px #1a1a1a;">99.07</div>
<div class="t" style="left:763.2px;top:727.36px;line-height:20px;height:20px;color:#1a1a1a;font-size:13.6px;font-weight:400;letter-spacing:0.094px;-webkit-text-stroke:0.18px #1a1a1a;">104.56</div>
<div class="t" style="left:920.1px;top:727.36px;line-height:20px;height:20px;color:#1a1a1a;font-size:13.6px;font-weight:400;letter-spacing:0.042px;-webkit-text-stroke:0.18px #1a1a1a;">92.73</div>
<div class="t" style="left:1040.1px;top:727.36px;line-height:20px;height:20px;color:#1a1a1a;font-size:13.6px;font-weight:400;letter-spacing:0.134px;-webkit-text-stroke:0.18px #1a1a1a;">17856</div>
<div class="t" style="left:1181.1px;top:727.36px;line-height:20px;height:20px;color:#1a1a1a;font-size:13.6px;font-weight:400;letter-spacing:0.134px;-webkit-text-stroke:0.18px #1a1a1a;">20016</div>
<div class="t" style="left:1320.1px;top:727.36px;line-height:20px;height:20px;color:#1a1a1a;font-size:13.6px;font-weight:400;-webkit-text-stroke:0.18px #1a1a1a;">0</div>
<div class="t" style="left:1463.2px;top:727.36px;line-height:20px;height:20px;color:#1a1a1a;font-size:13.6px;font-weight:400;letter-spacing:0.127px;-webkit-text-stroke:0.18px #1a1a1a;">5074.32</div>
<div class="t" style="left:1623px;top:727.36px;line-height:20px;height:20px;color:#1a1a1a;font-size:13.6px;font-weight:400;letter-spacing:0.127px;-webkit-text-stroke:0.18px #1a1a1a;">3356.91</div>
<div class="t" style="left:47.1px;top:769.36px;line-height:20px;height:20px;color:#1a1a1a;font-size:13.6px;font-weight:400;letter-spacing:0.414px;-webkit-text-stroke:0.18px #1a1a1a;">L11 Mixer</div>
<div class="t" style="left:193.2px;top:769.36px;line-height:20px;height:20px;color:#1a1a1a;font-size:13.6px;font-weight:400;letter-spacing:0.110px;-webkit-text-stroke:0.18px #1a1a1a;">2021-03-02 21:30:09.000</div>
<div class="t" style="left:405.3px;top:769.36px;line-height:20px;height:20px;color:#1a1a1a;font-size:13.6px;font-weight:400;-webkit-text-stroke:0.18px #1a1a1a;">2</div>
<div class="t" style="left:518.2px;top:769.36px;line-height:20px;height:20px;color:#1a1a1a;font-size:13.6px;font-weight:400;letter-spacing:0.042px;-webkit-text-stroke:0.18px #1a1a1a;">85.56</div>
<div class="t" style="left:618.1px;top:769.36px;line-height:20px;height:20px;color:#1a1a1a;font-size:13.6px;font-weight:400;letter-spacing:-0.019px;-webkit-text-stroke:0.18px #1a1a1a;">100</div>
<div class="t" style="left:763.2px;top:769.36px;line-height:20px;height:20px;color:#1a1a1a;font-size:13.6px;font-weight:400;letter-spacing:0.042px;-webkit-text-stroke:0.18px #1a1a1a;">95.34</div>
<div class="t" style="left:920.1px;top:769.36px;line-height:20px;height:20px;color:#1a1a1a;font-size:13.6px;font-weight:400;letter-spacing:0.042px;-webkit-text-stroke:0.18px #1a1a1a;">89.74</div>
<div class="t" style="left:1040.1px;top:769.36px;line-height:20px;height:20px;color:#1a1a1a;font-size:13.6px;font-weight:400;letter-spacing:0.134px;-webkit-text-stroke:0.18px #1a1a1a;">17568</div>
<div class="t" style="left:1181.1px;top:769.36px;line-height:20px;height:20px;color:#1a1a1a;font-size:13.6px;font-weight:400;letter-spacing:0.134px;-webkit-text-stroke:0.18px #1a1a1a;">18144</div>
<div class="t" style="left:1320.1px;top:769.36px;line-height:20px;height:20px;color:#1a1a1a;font-size:13.6px;font-weight:400;letter-spacing:-0.019px;-webkit-text-stroke:0.18px #1a1a1a;">576</div>
<div class="t" style="left:1463.2px;top:769.36px;line-height:20px;height:20px;color:#1a1a1a;font-size:13.6px;font-weight:400;letter-spacing:0.127px;-webkit-text-stroke:0.18px #1a1a1a;">4761.71</div>
<div class="t" style="left:1623px;top:769.36px;line-height:20px;height:20px;color:#1a1a1a;font-size:13.6px;font-weight:400;letter-spacing:0.127px;-webkit-text-stroke:0.18px #1a1a1a;">4014.85</div>
<div class="t" style="left:47.1px;top:811.36px;line-height:20px;height:20px;color:#1a1a1a;font-size:13.6px;font-weight:400;letter-spacing:0.414px;-webkit-text-stroke:0.18px #1a1a1a;">L11 Mixer</div>
<div class="t" style="left:193.2px;top:811.36px;line-height:20px;height:20px;color:#1a1a1a;font-size:13.6px;font-weight:400;letter-spacing:0.110px;-webkit-text-stroke:0.18px #1a1a1a;">2021-03-02 21:30:09.000</div>
<div class="t" style="left:405.3px;top:811.36px;line-height:20px;height:20px;color:#1a1a1a;font-size:13.6px;font-weight:400;-webkit-text-stroke:0.18px #1a1a1a;">3</div>
<div class="t" style="left:518.2px;top:811.36px;line-height:20px;height:20px;color:#1a1a1a;font-size:13.6px;font-weight:400;letter-spacing:0.094px;-webkit-text-stroke:0.18px #1a1a1a;">100.56</div>
<div class="t" style="left:618.1px;top:811.36px;line-height:20px;height:20px;color:#1a1a1a;font-size:13.6px;font-weight:400;letter-spacing:-0.019px;-webkit-text-stroke:0.18px #1a1a1a;">100</div>
<div class="t" style="left:763.2px;top:811.36px;line-height:20px;height:20px;color:#1a1a1a;font-size:13.6px;font-weight:400;letter-spacing:0.042px;-webkit-text-stroke:0.18px #1a1a1a;">96.75</div>
<div class="t" style="left:920.1px;top:811.36px;line-height:20px;height:20px;color:#1a1a1a;font-size:13.6px;font-weight:400;letter-spacing:0.094px;-webkit-text-stroke:0.18px #1a1a1a;">103.93</div>
<div class="t" style="left:1040.1px;top:811.36px;line-height:20px;height:20px;color:#1a1a1a;font-size:13.6px;font-weight:400;letter-spacing:0.134px;-webkit-text-stroke:0.18px #1a1a1a;">20016</div>
<div class="t" style="left:1181.1px;top:811.36px;line-height:20px;height:20px;color:#1a1a1a;font-size:13.6px;font-weight:400;letter-spacing:0.134px;-webkit-text-stroke:0.18px #1a1a1a;">17856</div>
<div class="t" style="left:1320.1px;top:811.36px;line-height:20px;height:20px;color:#1a1a1a;font-size:13.6px;font-weight:400;-webkit-text-stroke:0.18px #1a1a1a;">0</div>
<div class="t" style="left:1463.2px;top:811.36px;line-height:20px;height:20px;color:#1a1a1a;font-size:13.6px;font-weight:400;letter-spacing:0.127px;-webkit-text-stroke:0.18px #1a1a1a;">4617.37</div>
<div class="t" style="left:1623px;top:811.36px;line-height:20px;height:20px;color:#1a1a1a;font-size:13.6px;font-weight:400;letter-spacing:0.127px;-webkit-text-stroke:0.18px #1a1a1a;">3055.56</div>
<div class="t" style="left:47.1px;top:853.36px;line-height:20px;height:20px;color:#1a1a1a;font-size:13.6px;font-weight:400;letter-spacing:0.044px;-webkit-text-stroke:0.18px #1a1a1a;">L12 Deposit</div>
<div class="t" style="left:193.2px;top:853.36px;line-height:20px;height:20px;color:#1a1a1a;font-size:13.6px;font-weight:400;letter-spacing:0.110px;-webkit-text-stroke:0.18px #1a1a1a;">2021-03-02 21:30:09.000</div>
<div class="t" style="left:405.3px;top:853.36px;line-height:20px;height:20px;color:#1a1a1a;font-size:13.6px;font-weight:400;-webkit-text-stroke:0.18px #1a1a1a;">0</div>
<div class="t" style="left:518.2px;top:853.36px;line-height:20px;height:20px;color:#1a1a1a;font-size:13.6px;font-weight:400;-webkit-text-stroke:0.18px #1a1a1a;">0</div>
<div class="t" style="left:618.1px;top:853.36px;line-height:20px;height:20px;color:#1a1a1a;font-size:13.6px;font-weight:400;-webkit-text-stroke:0.18px #1a1a1a;">0</div>
<div class="t" style="left:763.2px;top:853.36px;line-height:20px;height:20px;color:#1a1a1a;font-size:13.6px;font-weight:400;-webkit-text-stroke:0.18px #1a1a1a;">0</div>
<div class="t" style="left:920.1px;top:853.36px;line-height:20px;height:20px;color:#1a1a1a;font-size:13.6px;font-weight:400;letter-spacing:0.042px;-webkit-text-stroke:0.18px #1a1a1a;">76.66</div>
<div class="t" style="left:1040.1px;top:853.36px;line-height:20px;height:20px;color:#1a1a1a;font-size:13.6px;font-weight:400;letter-spacing:0.134px;-webkit-text-stroke:0.18px #1a1a1a;">14964</div>
<div class="t" style="left:1181.1px;top:853.36px;line-height:20px;height:20px;color:#1a1a1a;font-size:13.6px;font-weight:400;letter-spacing:0.134px;-webkit-text-stroke:0.18px #1a1a1a;">20016</div>
<div class="t" style="left:1320.1px;top:853.36px;line-height:20px;height:20px;color:#1a1a1a;font-size:13.6px;font-weight:400;-webkit-text-stroke:0.18px #1a1a1a;">0</div>
<div class="t" style="left:1463.2px;top:853.36px;line-height:20px;height:20px;color:#1a1a1a;font-size:13.6px;font-weight:400;letter-spacing:0.127px;-webkit-text-stroke:0.18px #1a1a1a;">4626.23</div>
<div class="t" style="left:1623px;top:853.36px;line-height:20px;height:20px;color:#1a1a1a;font-size:13.6px;font-weight:400;-webkit-text-stroke:0.18px #1a1a1a;">0</div>
<div style="position:absolute;left:29px;top:860px;width:1685px;height:19px;background:#f3f3f3;"></div>
<div style="position:absolute;left:50px;top:860px;width:1247px;height:17px;background:#c1c1c1;"></div>
<svg style="position:absolute;left:36px;top:863.5px;" width="7" height="10" viewBox="0 0 7 10"><path d="M6 0.3V9.7L0.6 5Z" fill="#a3a3a3"/></svg>
<svg style="position:absolute;left:1699.8px;top:863.8px;" width="7" height="10" viewBox="0 0 7 10"><path d="M1 0.3V9.7L6.4 5Z" fill="#505050"/></svg>
<div style="position:absolute;left:1714px;top:860px;width:19px;height:19px;background:#fff;"></div>
<div style="position:absolute;left:1712.5px;top:674px;width:20.5px;height:186px;background:#f3f3f3;"></div>
<div style="position:absolute;left:1713.8px;top:695px;width:17px;height:21px;background:#c1c1c1;"></div>
<svg style="position:absolute;left:1717.5px;top:683px;" width="10" height="6" viewBox="0 0 10 6"><path d="M0 5.5L4.6 0.6L9.2 5.5Z" fill="#a3a3a3"/></svg>
<svg style="position:absolute;left:1717.5px;top:846px;" width="10" height="6" viewBox="0 0 10 6"><path d="M0 0.5L4.6 5.4L9.2 0.5Z" fill="#505050"/></svg>
<div style="position:absolute;left:1733px;top:625px;width:1px;height:254px;background:#bdbdbd;"></div>
<svg style="position:absolute;left:1744px;top:670px;" width="12" height="12" viewBox="0 0 12 12"><g fill="none" stroke="#1d0f2a"><rect x="1.3" y="1.7" width="9.4" height="8" stroke-width="1.2"/><path d="M1 2.2H11" stroke-width="2"/><path d="M4.4 2.5V9.7M7.6 2.5V9.7" stroke-width="1.05"/></g></svg>
<div class="t" style="left:1739px;top:687.3px;width:20px;height:56px;font-size:12.3px;letter-spacing:0.4px;color:#1a1a1a;writing-mode:vertical-rl;line-height:20px;">Columns</div>
<div style="position:absolute;left:830px;top:268px;width:241px;height:250.5px;background:#f4f4f4;border:1px solid #bdbdbd;border-radius:3px;box-shadow:0 1px 3px rgba(0,0,0,0.12);"></div>
<div style="position:absolute;left:831px;top:306px;width:239px;height:1px;background:#bdbdbd;"></div>
<div style="position:absolute;left:831px;top:304px;width:79px;height:2.6px;background:#2196f3;"></div>
<svg style="position:absolute;left:865px;top:282px;" width="12" height="10" viewBox="0 0 12 10"><path d="M0.2 1.5H10.9M0.2 4.6H10.9M0.2 7.7H10.9" stroke="#2196f3" stroke-width="1.05"/></svg>
<svg style="position:absolute;left:944.5px;top:281px;" width="13" height="12" viewBox="0 0 13 12"><path d="M1 1.4H11.2L7.3 6.3V9.2L5.6 10.6V6.3Z" fill="none" stroke="#222" stroke-width="1.05" stroke-linejoin="miter"/></svg>
<svg style="position:absolute;left:1024px;top:281px;" width="12" height="11" viewBox="0 0 12 11"><rect x="0.9" y="1" width="9.6" height="8.8" fill="none" stroke="#111" stroke-width="1.1"/><path d="M0.9 1.7H10.5" stroke="#111" stroke-width="1.8"/><path d="M4.1 2V9.8M7.3 2V9.8" stroke="#111" stroke-width="1"/></svg>
<svg style="position:absolute;left:844px;top:322px;" width="14" height="14" viewBox="0 0 14 14"><g fill="none" stroke="#2a2a2a" stroke-width="1.0" stroke-linejoin="round"><path d="M8.4 1L13.1 5.4L10.6 6.3L8.6 8.3L7.6 11.7L2 5.7L5.4 5L7.2 3.2Z"/><path d="M4.8 8.8L0.9 12.9"/></g></svg>
<div class="t" style="left:871.4px;top:319.97px;line-height:20px;height:20px;color:#3d3d3d;font-size:12px;font-weight:400;letter-spacing:0.297px;">Pin Column</div>
<svg style="position:absolute;left:1052.6px;top:325px;" width="6" height="9" viewBox="0 0 6 9"><path d="M0.4 0.4L5.6 4.2L0.4 8Z" fill="#111"/></svg>
<div style="position:absolute;left:831px;top:351px;width:239px;height:1px;background:#c2c2c2;"></div>
<div class="t" style="left:871.2px;top:365.07px;line-height:20px;height:20px;color:#3d3d3d;font-size:12px;font-weight:400;letter-spacing:0.342px;">Autosize This Column</div>
<div class="t" style="left:871.2px;top:397.07px;line-height:20px;height:20px;color:#3d3d3d;font-size:12px;font-weight:400;letter-spacing:0.415px;">Autosize All Columns</div>
<div style="position:absolute;left:831px;top:428px;width:239px;height:1px;background:#c2c2c2;"></div>
<div style="position:absolute;left:844px;top:446px;width:2px;height:1px;background:#262626;"></div>
<div style="position:absolute;left:848px;top:446px;width:9px;height:1px;background:#262626;"></div>
<div style="position:absolute;left:848px;top:449px;width:2px;height:1px;background:#262626;"></div>
<div style="position:absolute;left:852px;top:449px;width:5px;height:1px;background:#262626;"></div>
<div style="position:absolute;left:848px;top:452px;width:2px;height:1px;background:#262626;"></div>
<div style="position:absolute;left:852px;top:452px;width:5px;height:1px;background:#262626;"></div>
<div style="position:absolute;left:848px;top:455px;width:2px;height:1px;background:#262626;"></div>
<div style="position:absolute;left:852px;top:455px;width:5px;height:1px;background:#262626;"></div>
<div class="t" style="left:871.2px;top:442.17px;line-height:20px;height:20px;color:#3d3d3d;font-size:12px;font-weight:400;letter-spacing:0.397px;">Group by ParentDescription</div>
<div style="position:absolute;left:831px;top:473px;width:239px;height:1px;background:#c2c2c2;"></div>
<div class="t" style="left:871.2px;top:487.17px;line-height:20px;height:20px;color:#3d3d3d;font-size:12px;font-weight:400;letter-spacing:0.156px;">Reset Columns</div>
</body>
</html>
